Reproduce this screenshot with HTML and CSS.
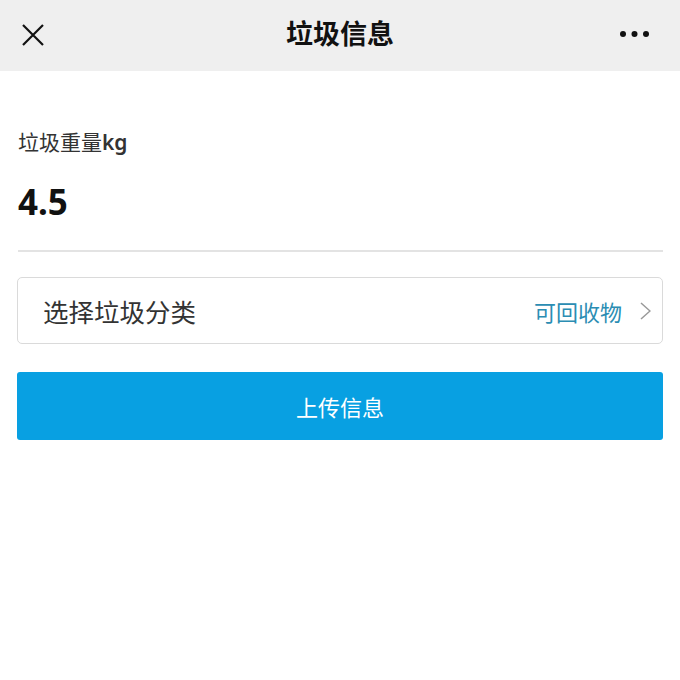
FILE: index.html
```html
<!DOCTYPE html>
<html>
<head>
    <title>垃圾信息</title>
    <link rel="stylesheet" href="styles.css">
</head>
<body>
    <div class="header">
        <div class="close">
            <svg width="22" height="22" viewBox="0 0 22 22">
                <path d="M1 1 L21 21 M21 1 L1 21" stroke="#111" stroke-width="2.2" fill="none"/>
            </svg>
        </div>
        <h1 class="title">垃圾信息</h1>
        <div class="more">
            <svg width="30" height="8" viewBox="0 0 30 8">
                <circle cx="3" cy="4" r="3" fill="#111"/>
                <circle cx="14.5" cy="4" r="3" fill="#111"/>
                <circle cx="26" cy="4" r="3" fill="#111"/>
            </svg>
        </div>
    </div>

    <div class="content">
        <div class="label">垃圾重量<span class="unit">kg</span></div>
        <div class="value">4.5</div>
        <div class="divider"></div>

        <div class="select">
            <span class="select-name">选择垃圾分类</span>
            <span class="select-right">
                <span class="select-value">可回收物</span>
                <svg class="chevron" width="11" height="18" viewBox="0 0 11 18">
                    <path d="M1 1 L10 9 L1 17" stroke="#999" stroke-width="1.5" fill="none"/>
                </svg>
            </span>
        </div>

        <button class="submit">上传信息</button>
    </div>
</body>
</html>
```

FILE: styles.css
```css
body {
    margin: 0;
    background-color: #fff;
    font-family: "Noto Sans", "Noto Sans CJK SC", sans-serif;
    color: #333;
}
.header {
    height: 71px;
    background-color: #efefef;
    display: grid;
    grid-template-columns: 1fr auto 1fr;
    align-items: center;
    padding: 0 30px;
}
.close svg,
.more svg {
    display: block;
}
.close {
    margin: -2px 0 0 -8px;
}
.more {
    justify-self: end;
    margin-top: -4px;
}
.title {
    margin: 0;
    font-size: 27px;
    font-weight: bold;
    color: #111;
    line-height: 34px;
    margin-top: -4px;
}
.content {
    padding: 0 17px;
}
.label {
    margin-top: 56px;
    padding-left: 1px;
    font-size: 21px;
    line-height: 30px;
    color: #333;
}
.unit {
    font-weight: 600;
}
.value {
    margin-top: 23px;
    padding-left: 1px;
    font-size: 35px;
    font-weight: bold;
    line-height: 44px;
    color: #111;
}
.divider {
    margin: 26px 0 0 1px;
    height: 2px;
    background-color: #e3e3e3;
}
.select {
    margin-top: 25px;
    height: 65px;
    border: 1px solid #dadada;
    border-radius: 5px;
    display: flex;
    align-items: center;
    justify-content: space-between;
    padding: 0 11px 0 25px;
}
.select-name {
    font-size: 25.5px;
    color: #333;
}
.select-right {
    display: flex;
    align-items: center;
    gap: 18px;
}
.select-value {
    font-size: 22px;
    color: #2b8db3;
}
.chevron {
    display: block;
}
.submit {
    display: block;
    width: 100%;
    margin-top: 28px;
    height: 68px;
    border: none;
    border-radius: 3px;
    background-color: #08a0e2;
    color: #fff;
    font-family: "Noto Sans", "Noto Sans CJK SC", sans-serif;
    font-size: 22px;
    cursor: pointer;
}
```
